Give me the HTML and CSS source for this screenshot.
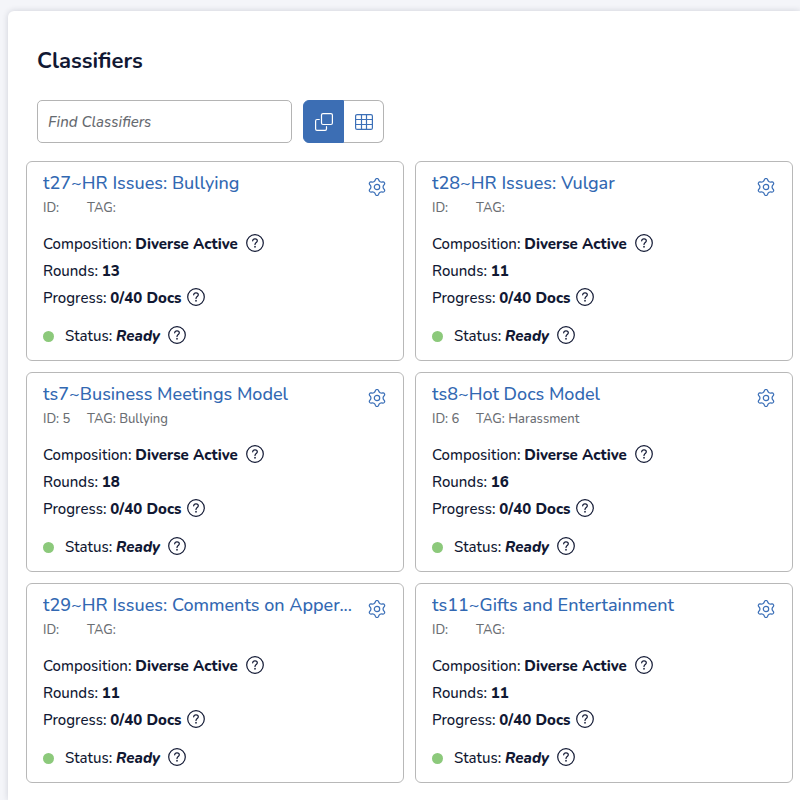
FILE: index.html
```html
<!DOCTYPE html>
<html lang="en">
<head>
<meta charset="utf-8">
<title>Classifiers</title>
<meta name="viewport" content="width=device-width, initial-scale=1">
<link rel="stylesheet" href="styles.css">
</head>
<body>
<svg class="sprite" aria-hidden="true">
  <symbol id="gear" viewBox="0 0 18 18">
    <path d="M7.5 1.5A1.6 1.6 0 0 1 10.5 1.5C11 3.5 12.8 4.5 14.8 3.9A1.6 1.6 0 0 1 16.3 6.5C14.8 8 14.8 10 16.3 11.5A1.6 1.6 0 0 1 14.8 14.1C12.8 13.5 11 14.5 10.5 16.5A1.6 1.6 0 0 1 7.5 16.5C7 14.5 5.2 13.5 3.2 14.1A1.6 1.6 0 0 1 1.7 11.5C3.2 10 3.2 8 1.7 6.5A1.6 1.6 0 0 1 3.2 3.9C5.2 4.5 7 3.5 7.5 1.5Z"/>
    <circle cx="9" cy="9" r="2.7"/>
  </symbol>
  <symbol id="help" viewBox="0 0 18 18">
    <circle cx="9" cy="9" r="8.3"/>
    <path d="M6.7 6.8C6.8 5.4 7.8 4.8 9 4.8C10.3 4.8 11.3 5.6 11.3 6.7C11.3 8.5 9 8.5 9 10.5"/>
    <path d="M9 12.3V13.2"/>
  </symbol>
</svg>
<main class="panel">
  <h1 class="heading">Classifiers</h1>
  <div class="toolbar">
    <input class="search" type="text" placeholder="Find Classifiers" aria-label="Find Classifiers">
    <div class="views">
      <button class="view view-active" type="button" aria-label="Card view">
        <svg class="view-icon" viewBox="0 0 18 18"><rect x="6.5" y=".6" width="10.9" height="10.9" rx="1.5"/><path d="M4.3 6.5H2A1.4 1.4 0 0 0 .6 7.9V16A1.4 1.4 0 0 0 2 17.4H10.1A1.4 1.4 0 0 0 11.5 16V13.7"/></svg>
      </button>
      <button class="view" type="button" aria-label="Table view">
        <svg class="view-icon" viewBox="0 0 18 18"><rect x=".6" y="1.6" width="16.8" height="14.8" rx="1.5"/><path d="M.6 6.5H17.4M.6 11.5H17.4M6.5 1.6V16.4M11.5 1.6V16.4"/></svg>
      </button>
    </div>
  </div>
  <div class="cards">
    <article class="card">
      <header class="card-head"><h2 class="title"><a href="#">t27~HR Issues: Bullying</a></h2><button class="settings" type="button" aria-label="Settings"><svg class="icon"><use href="#gear"/></svg></button></header>
      <div class="meta"><span class="meta-id">ID:</span><span>TAG:</span></div>
      <p class="row"><span>Composition: <b>Diverse Active</b></span><svg class="help help-wide"><use href="#help"/></svg></p>
      <p class="row"><span>Rounds: <b>13</b></span></p>
      <p class="row"><span>Progress: <b>0/40 Docs</b></span><svg class="help"><use href="#help"/></svg></p>
      <p class="row status"><span class="dot"></span><span>Status: <b><i>Ready</i></b></span><svg class="help help-wide"><use href="#help"/></svg></p>
    </article>
    <article class="card">
      <header class="card-head"><h2 class="title"><a href="#">t28~HR Issues: Vulgar</a></h2><button class="settings" type="button" aria-label="Settings"><svg class="icon"><use href="#gear"/></svg></button></header>
      <div class="meta"><span class="meta-id">ID:</span><span>TAG:</span></div>
      <p class="row"><span>Composition: <b>Diverse Active</b></span><svg class="help help-wide"><use href="#help"/></svg></p>
      <p class="row"><span>Rounds: <b>11</b></span></p>
      <p class="row"><span>Progress: <b>0/40 Docs</b></span><svg class="help"><use href="#help"/></svg></p>
      <p class="row status"><span class="dot"></span><span>Status: <b><i>Ready</i></b></span><svg class="help help-wide"><use href="#help"/></svg></p>
    </article>
    <article class="card">
      <header class="card-head"><h2 class="title"><a href="#">ts7~Business Meetings Model</a></h2><button class="settings" type="button" aria-label="Settings"><svg class="icon"><use href="#gear"/></svg></button></header>
      <div class="meta"><span class="meta-id">ID: 5</span><span>TAG: Bullying</span></div>
      <p class="row"><span>Composition: <b>Diverse Active</b></span><svg class="help help-wide"><use href="#help"/></svg></p>
      <p class="row"><span>Rounds: <b>18</b></span></p>
      <p class="row"><span>Progress: <b>0/40 Docs</b></span><svg class="help"><use href="#help"/></svg></p>
      <p class="row status"><span class="dot"></span><span>Status: <b><i>Ready</i></b></span><svg class="help help-wide"><use href="#help"/></svg></p>
    </article>
    <article class="card">
      <header class="card-head"><h2 class="title"><a href="#">ts8~Hot Docs Model</a></h2><button class="settings" type="button" aria-label="Settings"><svg class="icon"><use href="#gear"/></svg></button></header>
      <div class="meta"><span class="meta-id">ID: 6</span><span>TAG: Harassment</span></div>
      <p class="row"><span>Composition: <b>Diverse Active</b></span><svg class="help help-wide"><use href="#help"/></svg></p>
      <p class="row"><span>Rounds: <b>16</b></span></p>
      <p class="row"><span>Progress: <b>0/40 Docs</b></span><svg class="help"><use href="#help"/></svg></p>
      <p class="row status"><span class="dot"></span><span>Status: <b><i>Ready</i></b></span><svg class="help help-wide"><use href="#help"/></svg></p>
    </article>
    <article class="card">
      <header class="card-head"><h2 class="title"><a href="#">t29~HR Issues: Comments on Apper...</a></h2><button class="settings" type="button" aria-label="Settings"><svg class="icon"><use href="#gear"/></svg></button></header>
      <div class="meta"><span class="meta-id">ID:</span><span>TAG:</span></div>
      <p class="row"><span>Composition: <b>Diverse Active</b></span><svg class="help help-wide"><use href="#help"/></svg></p>
      <p class="row"><span>Rounds: <b>11</b></span></p>
      <p class="row"><span>Progress: <b>0/40 Docs</b></span><svg class="help"><use href="#help"/></svg></p>
      <p class="row status"><span class="dot"></span><span>Status: <b><i>Ready</i></b></span><svg class="help help-wide"><use href="#help"/></svg></p>
    </article>
    <article class="card">
      <header class="card-head"><h2 class="title"><a href="#">ts11~Gifts and Entertainment</a></h2><button class="settings" type="button" aria-label="Settings"><svg class="icon"><use href="#gear"/></svg></button></header>
      <div class="meta"><span class="meta-id">ID:</span><span>TAG:</span></div>
      <p class="row"><span>Composition: <b>Diverse Active</b></span><svg class="help help-wide"><use href="#help"/></svg></p>
      <p class="row"><span>Rounds: <b>11</b></span></p>
      <p class="row"><span>Progress: <b>0/40 Docs</b></span><svg class="help"><use href="#help"/></svg></p>
      <p class="row status"><span class="dot"></span><span>Status: <b><i>Ready</i></b></span><svg class="help help-wide"><use href="#help"/></svg></p>
    </article>
  </div>
</main>
</body>
</html>
```
FILE: styles.css
```css
* {
  box-sizing: border-box;
}

body {
  margin: 0;
  padding: 11px 0 0 8px;
  min-height: 100vh;
  display: flex;
  flex-direction: column;
  background: #f4f5f9;
  color: #111833;
  font: 500 15px/27px Nunito, Lato, sans-serif;
}

b {
  font-weight: 800;
}

.sprite {
  position: absolute;
  width: 0;
  height: 0;
}

.panel {
  flex: 1;
  padding: 32px 7px 16px 18px;
  background: #fff;
  border-radius: 6px 0 0 0;
  box-shadow: 0 0 6px rgba(20, 25, 50, 0.16);
}

.heading {
  margin: 0 0 21px 11px;
  font-size: 22px;
  line-height: 36px;
  font-weight: 700;
}

.toolbar {
  display: flex;
  gap: 11px;
  margin: 0 0 18px 11px;
}

.search {
  width: 255px;
  height: 43px;
  padding: 0 10px;
  border: 1px solid #b4b4b4;
  border-radius: 5px;
  color: #111833;
  font: inherit;
}

.search::placeholder {
  color: #666a70;
  font-style: italic;
  opacity: 1;
}

.views {
  display: flex;
}

.view {
  display: grid;
  place-items: center;
  width: 40px;
  height: 43px;
  padding: 0;
  border: 1px solid #b4b4b4;
  border-left: 0;
  border-radius: 0 6px 6px 0;
  background: #fff;
  color: #3c70b8;
}

.view-active {
  width: 41px;
  border: 1px solid #3c6eb4;
  border-radius: 6px 0 0 6px;
  background: #3c6eb4;
  color: #fff;
}

.view-icon,
.icon,
.help {
  display: block;
  width: 18px;
  height: 18px;
  fill: none;
  stroke: currentColor;
  stroke-width: 1.2;
  stroke-linecap: round;
  stroke-linejoin: round;
}

.cards {
  display: grid;
  grid-template-columns: repeat(2, minmax(0, 1fr));
  gap: 11px;
}

.card {
  padding: 9px 17px 10px 16px;
  border: 1px solid #b8b8b8;
  border-radius: 6px;
}

.card-head {
  display: flex;
  gap: 8px;
}

.title {
  flex: 1;
  min-width: 0;
  margin: 0;
  overflow: hidden;
  font-size: 18px;
  line-height: 25px;
  font-weight: 500;
  white-space: nowrap;
}

.title a {
  color: #3268b2;
  text-decoration: none;
}

.settings {
  display: flex;
  align-items: flex-start;
  padding: 7px 0 0;
  border: 0;
  background: none;
  color: #3c70b8;
}

.meta {
  display: flex;
  margin: 2px 0 13px;
  color: #6b6e73;
  font-size: 13px;
  line-height: 20px;
}

.meta-id {
  flex: 0 0 44px;
}

.row {
  display: flex;
  gap: 6px;
  margin: 0;
}

.help {
  margin-top: 3px;
}

.help-wide {
  margin-left: 2px;
}

.status {
  margin-top: 11px;
}

.dot {
  width: 11px;
  height: 11px;
  margin: 8px 5px 0 0;
  border-radius: 50%;
  background: #8cc97b;
}
```
